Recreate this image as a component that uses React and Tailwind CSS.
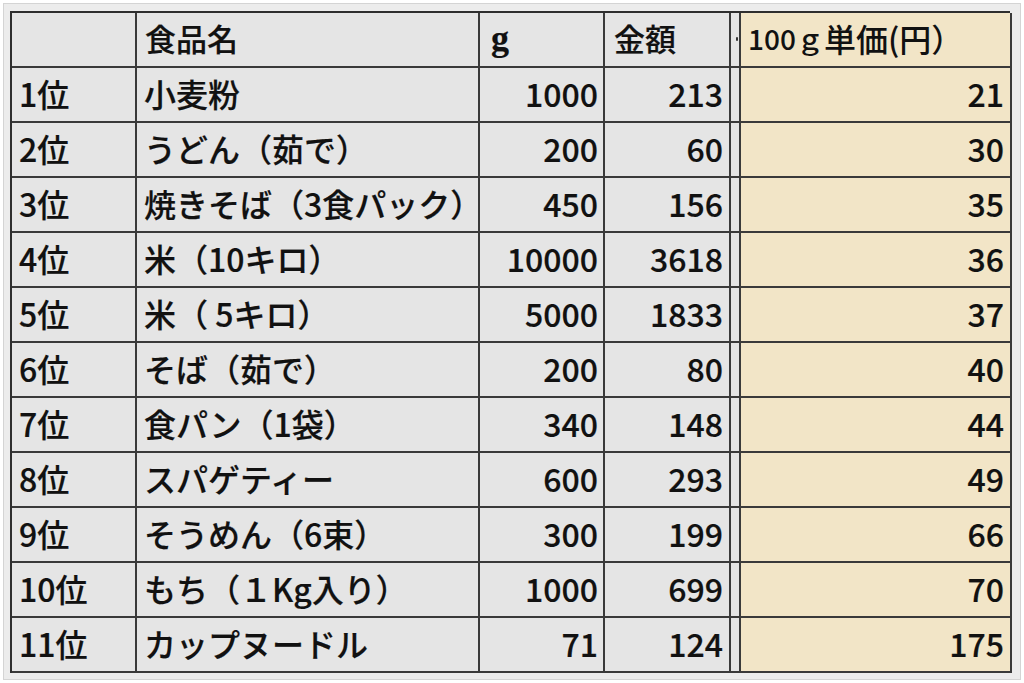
import React from 'react';

const ROWS = [
  ['1位', '小麦粉', '1000', '213', '21'],
  ['2位', 'うどん（茹で）', '200', '60', '30'],
  ['3位', '焼きそば（3食パック）', '450', '156', '35'],
  ['4位', '米（10キロ）', '10000', '3618', '36'],
  ['5位', '米（ 5キロ）', '5000', '1833', '37'],
  ['6位', 'そば（茹で）', '200', '80', '40'],
  ['7位', '食パン（1袋）', '340', '148', '44'],
  ['8位', 'スパゲティー', '600', '293', '49'],
  ['9位', 'そうめん（6束）', '300', '199', '66'],
  ['10位', 'もち（１Kg入り）', '1000', '699', '70'],
  ['11位', 'カップヌードル', '71', '124', '175'],
];

const cell = 'h-[55px] border-r-2 border-b-2 border-[#3a3a3a] flex items-center pb-[4px]';
const gray = 'bg-[#e5e5e5]';
const beige = 'bg-[#f2e5c7]';

export default function App() {
  return (
    <div
      className="w-[1024px] h-[683px] bg-white p-[3px] overflow-hidden text-[#111]"
      style={{ fontFamily: '"Noto Sans CJK JP", "Noto Sans", sans-serif' }}
    >
      <div className="h-full border border-[#d4d4d4] bg-[#ececec] pl-[6px] pt-[7px]">
        <div className="grid grid-cols-[125px_343px_125px_126px_10px_271px] w-[1000px] border-l-2 border-t-2 border-[#2e2e2e] text-[32px] leading-none font-medium [-webkit-text-stroke:0.2px_#111]">
          {/* header */}
          <div className={`${cell} ${gray}`} />
          <div className={`${cell} ${gray} pl-[8px] text-[31px]`}>食品名</div>
          <div
            className={`${cell} ${gray} pl-[11px] text-[36px] font-bold`}
            style={{ fontFamily: '"Liberation Serif", serif' }}
          >
            g
          </div>
          <div className={`${cell} ${gray} pl-[9px] text-[31px]`}>金額</div>
          <div className={`${cell} ${gray} justify-end items-start pt-[24px]`}>
            <span className="block w-[2px] h-[4px] bg-[#333] rounded-full mr-[1px]" />
          </div>
          <div className={`${cell} ${beige} pl-[7px] [-webkit-text-stroke:0px]`}>
            <span className="text-[28px]">100ｇ</span>
            <span className="text-[32px]">単価(円）</span>
          </div>

          {ROWS.map(([rank, name, g, price, unit]) => (
            <React.Fragment key={rank}>
              <div className={`${cell} ${gray} pl-[7px]`}>{rank}</div>
              <div className={`${cell} ${gray} pl-[7px] whitespace-pre`}>{name}</div>
              <div className={`${cell} ${gray} justify-end pr-[5px]`}>{g}</div>
              <div className={`${cell} ${gray} justify-end pr-[6px]`}>{price}</div>
              <div className={`${cell} ${gray}`} />
              <div className={`${cell} ${beige} justify-end pr-[6px]`}>{unit}</div>
            </React.Fragment>
          ))}
        </div>
      </div>
    </div>
  );
}
